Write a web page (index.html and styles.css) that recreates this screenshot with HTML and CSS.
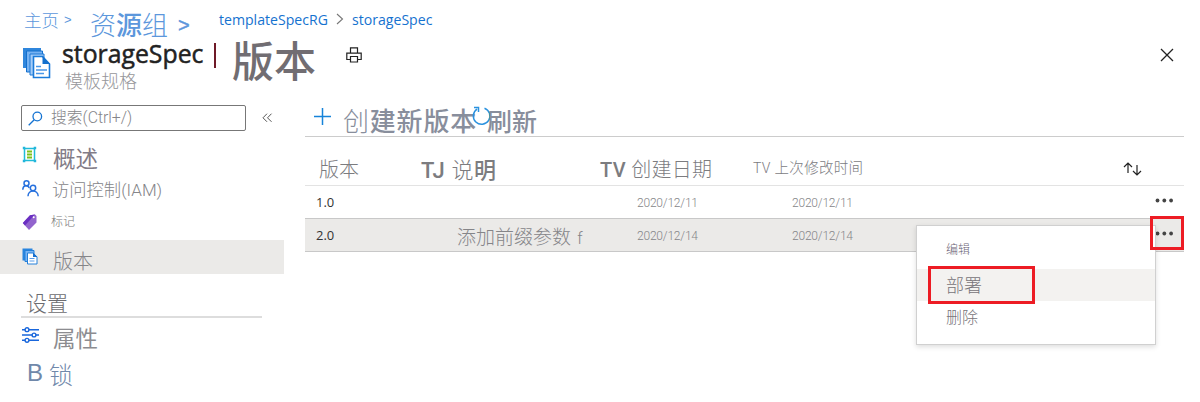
FILE: index.html
```html
<!DOCTYPE html>
<html lang="zh-CN">
<head>
<meta charset="utf-8">
<title>storageSpec | 版本</title>
<link rel="stylesheet" href="styles.css">
</head>
<body>
<div class="page">
  <nav class="crumbs">
    <a class="crumb-home">主页 <span class="crumb-sep-small">&gt;</span></a>
    <a class="crumb-group">资<b>源</b>组<span class="crumb-sep">&gt;</span></a>
    <a class="crumb-link crumb-rg">templateSpecRG</a>
    <svg class="crumb-chevron" width="8" height="12" viewBox="0 0 8 12"><path d="M1 1l5.500 5L1 11" fill="none" stroke="#777" stroke-width="1.100"/></svg>
    <a class="crumb-link crumb-spec">storageSpec</a>
  </nav>
  <header class="title-bar">
    <svg class="title-icon" width="29" height="32" viewBox="0 0 29 32">
      <path d="M1 1h18v20H1z" fill="#2f86dc"/><path d="M4.500 4h16v21h-16z" fill="#76b2f2" stroke="#1470cd"/>
      <path d="M8 7h14v21H8z" fill="#a5cdf8" stroke="#1c79d5"/>
      <path d="M11.500 9.500h9l7 7.500v13.500h-16z" fill="#fff" stroke="#1b7bd9" stroke-width="1.600"/><path d="M20.500 9l7.500 8h-7.500z" fill="#1470cd"/>
      <path d="M14 19.500h5M14 23h11M14 26.500h8" stroke="#4a97e8" stroke-width="1.500"/>
    </svg>
    <div class="title-text">
      <h1 class="title-name">storageSpec</h1>
      <p class="title-kind">模板规格</p>
    </div>
    <span class="title-divider"></span>
    <h2 class="title-section">版本</h2>
    <svg class="print-icon" width="16" height="16" viewBox="0 0 16 16" fill="none" stroke="#222" stroke-width="1.200"><path d="M4.500 6V.8h7V6M4 12.500H.8V6.200h14.400v6.300H12M4.500 9.500h7v5.500h-7z"/></svg>
    <svg class="close-icon" width="14" height="14" viewBox="0 0 14 14"><path d="M1 1l12 12M13 1L1 13" stroke="#222" stroke-width="1.300"/></svg>
  </header>
  <div class="body">
    <aside class="sidebar">
      <div class="search-row">
        <div class="search-box">
          <svg width="15" height="15" viewBox="0 0 15 15" fill="none" stroke="#1473d2" stroke-width="1.300"><circle cx="9.300" cy="5.500" r="4.300"/><path d="M6.200 8.700L.7 14.200"/></svg>
          <span class="search-text">搜索(Ctrl+/)</span>
        </div>
        <svg class="collapse" width="11" height="10" viewBox="0 0 11 10" fill="none" stroke="#555"><path d="M5 .7L1 4.800l4 4M9.500 .7l-4 4.100 4 4"/></svg>
      </div>
      <div class="nav-item nav-overview">
        <svg width="16" height="17" viewBox="0 0 16 17"><path d="M2.500 2.500h10v12h-10z" fill="#fff" stroke="#20bcd8" stroke-width="1.500"/><path d="M.8 .8h2.500v2.500H.8zM11.700 .8h2.500v2.500h-2.500zM.8 13.700h2.500v2.500H.8zM11.700 13.700h2.500v2.500h-2.500z" fill="#22b6dc"/><path d="M5 5.500h5M5 8.500h5M5 11.500h5" stroke="#7fc21c" stroke-width="2"/></svg>
        <b>概述</b>
      </div>
      <div class="nav-item nav-iam">
        <svg width="17" height="17" viewBox="0 0 17 17" fill="none" stroke="#2670dd" stroke-width="1.500"><circle cx="4.500" cy="3.300" r="2.500"/><path d="M.8 9.800c0-5 5-5 6.500-2"/><circle cx="11" cy="8" r="2.700"/><path d="M6 16.200c0-7 10-7 10.200 0"/></svg>
        <span>访问控制<span class="latin-light">(IAM)</span></span>
      </div>
      <div class="nav-item nav-tags">
        <svg width="16" height="17" viewBox="0 0 16 17"><path d="M8 1.200l5-.7L14.500 2v6.500L7 16 .8 9z" fill="#9264cd"/><path d="M8 1.200l5-.7L3 11.500.8 9z" fill="#6a2fc2"/><circle cx="11.700" cy="3.300" r="1" fill="#fff"/></svg>
        <span>标记</span>
      </div>
      <div class="nav-item nav-versions">
        <svg width="16" height="17" viewBox="0 0 16 17"><path d="M.5 .5h10v12H.5z" fill="#2985df"/><path d="M3 2.500h9v11H3z" fill="#7ab5f4" stroke="#2580da"/><path d="M5.500 5h5.500l4 4v7H5.500z" fill="#fff" stroke="#2580da"/><path d="M11 4.500l4.500 4.500H11z" fill="#1870cf"/><path d="M7.500 10.500h5M7.500 13h5" stroke="#5b9eea"/></svg>
        <span>版本</span>
      </div>
      <div class="nav-heading">设置</div>
      <div class="nav-item nav-props">
        <svg width="17" height="16" viewBox="0 0 17 16" fill="#fff" stroke="#1967dc" stroke-width="1.400"><path d="M0 2.700h17M0 8h17M0 13.300h17"/><circle cx="5" cy="2.700" r="1.900"/><circle cx="12" cy="8" r="1.900"/><circle cx="5" cy="13.300" r="1.900"/></svg>
        <b>属性</b>
      </div>
      <div class="nav-locks"><span class="lock-mark">B</span><span>锁</span></div>
    </aside>
    <main class="content">
      <div class="toolbar">
        <svg class="plus-icon" width="17" height="17" viewBox="0 0 17 17"><path d="M8.500 0v17M0 8.500h17" stroke="#1683d9" stroke-width="1.500"/></svg>
        <span class="tool-create">创<b>建新版本</b></span>
        <svg class="refresh-icon" width="20" height="20" viewBox="0 0 20 20" fill="none" stroke="#2b92df" stroke-width="1.500"><path d="M12.500 2.200A8.300 8.300 0 1 1 5 3.100M2 1.500h4.500V6"/></svg>
        <b class="tool-refresh">刷新</b>
      </div>
      <div class="row head">
        <span class="col-version">版本</span>
        <span class="col-desc"><b class="mark">TJ</b> 说<b>明</b></span>
        <span class="col-created"><b class="mark">TV</b> 创建日期</span>
        <span class="col-modified"><span class="mark-small">TV</span> 上次修改时间</span>
        <svg class="sort-icon" width="19" height="14" viewBox="0 0 19 14" fill="none" stroke="#222" stroke-width="1.200"><path d="M5 11V1M1 5l4-4 4 4M14 3v10M10 9l4 4 4-4"/></svg>
      </div>
      <div class="row">
        <span class="col-version">1.0</span>
        <span class="col-desc"></span>
        <span class="col-created">2020/12/11</span>
        <span class="col-modified">2020/12/11</span>
        <svg class="more" width="19" height="5" viewBox="0 0 19 5" fill="#444"><circle cx="2.500" cy="2.500" r="1.900"/><circle cx="9.300" cy="2.500" r="1.900"/><circle cx="16.100" cy="2.500" r="1.900"/></svg>
      </div>
      <div class="row selected">
        <span class="col-version">2.0</span>
        <span class="col-desc">添加前缀参数 <span class="desc-tail">f</span></span>
        <span class="col-created">2020/12/14</span>
        <span class="col-modified">2020/12/14</span>
        <svg class="more" width="19" height="5" viewBox="0 0 19 5" fill="#444"><circle cx="2.500" cy="2.500" r="1.900"/><circle cx="9.300" cy="2.500" r="1.900"/><circle cx="16.100" cy="2.500" r="1.900"/></svg>
        <div class="menu">
          <div class="menu-edit">编辑</div>
          <div class="menu-deploy">部署<div class="mark-box deploy-box"></div></div>
          <div class="menu-delete">删除</div>
        </div>
        <div class="mark-box more-box"></div>
      </div>
    </main>
  </div>
</div>
</body>
</html>
```
FILE: styles.css
```css
* { box-sizing: border-box; }
body { margin: 0; background: #fff; font-family: "Liberation Sans", "Noto Sans CJK SC", sans-serif; }
svg { display: block; flex: none; }
h1, h2, p { margin: 0; font-weight: 400; }
.page { width: 1200px; height: 402px; overflow: hidden; }

.crumbs { display: flex; align-items: flex-start; height: 40px; padding-left: 24px; white-space: nowrap; color: #5c97dc; }
.crumb-home { display: flex; gap: 5px; width: 66px; margin-top: 11px; font-size: 17.500px; line-height: 20px; font-weight: 300; }
.crumb-sep-small { font-size: 13px; line-height: 18px; }
.crumb-group { display: flex; width: 129px; margin-top: 10px; font-size: 26px; line-height: 32px; font-weight: 300; }
.crumb-group b { font-weight: 500; }
.crumb-sep { margin-left: 10px; font-size: 20px; font-weight: 400; line-height: 30px; -webkit-text-stroke: .4px; }
.crumb-link { font-family: "Open Sans", sans-serif; font-size: 14.100px; line-height: 20px; margin-top: 10px; color: #1572cf; }
.crumb-rg { width: 117px; }
.crumb-chevron { margin: 13px 8px 0 0; }

.title-bar { display: flex; align-items: flex-start; height: 65px; padding-left: 22px; }
.title-icon { margin-top: 7px; }
.title-text { width: 163px; padding-left: 11px; }
.title-name { font: 500 24.800px/26px "Open Sans", sans-serif; color: #222; -webkit-text-stroke: .5px #222; }
.title-kind { margin: 3px 0 0 3px; font-size: 18px; line-height: 26px; font-weight: 300; color: #96969a; }
.title-divider { width: 2px; height: 25px; margin-top: 3px; background: #6f1a28; }
.title-section { width: 130px; padding-left: 16px; font-size: 42px; line-height: 45px; font-weight: 500; color: #716d72; }
.print-icon { margin-top: 7px; }
.close-icon { margin: 8px 0 0 798px; }

.body { display: flex; }
.sidebar { width: 284px; }
.search-row { display: flex; align-items: center; height: 26px; padding-left: 21px; }
.search-box { display: flex; align-items: center; gap: 8px; width: 225px; height: 26px; padding-left: 6px; border: 1px solid #777; border-radius: 2px; }
.search-text { font: 300 15.800px/22px "Roboto", "Noto Sans CJK SC", sans-serif; color: #858589; }
.collapse { margin-left: 16px; }

.nav-item { display: flex; align-items: center; gap: 15px; padding-left: 22px; font-weight: 300; color: #858589; }
.nav-overview { height: 44px; margin-top: 4px; font-size: 22.500px; color: #827c87; }
.nav-overview svg { margin-bottom: 5px; }
.nav-iam { height: 22px; font-size: 17.300px; gap: 13px; }
.nav-iam > span { line-height: 22px; padding-bottom: 1px; }
.nav-iam svg { margin-bottom: 3px; }
.latin-light { font-family: "Roboto", sans-serif; font-size: 17px; }
.nav-tags { height: 39px; font-size: 12px; gap: 13px; padding-top: 2px; color: #777; }
.nav-tags svg { margin-top: 2px; }
.nav-tags > span { padding-bottom: 3px; }
.nav-versions { height: 34px; font-size: 20px; gap: 15px; background: #ebeae8; }
.nav-versions svg { margin-bottom: 1px; }
.nav-versions span { padding-top: 7px; }
.nav-heading { width: 241px; height: 44px; margin-left: 21px; padding: 17px 0 0 5px; border-bottom: 2px solid #ddd; font-size: 21px; line-height: 26px; font-weight: 300; color: #6c6c70; }
.nav-props { height: 38px; font-size: 22.500px; gap: 14px; color: #8c8c90; }
.nav-props svg { margin-bottom: 4px; }
.nav-locks { display: flex; align-items: center; gap: 6px; height: 34px; padding-left: 27px; font-size: 24px; font-weight: 300; color: #7088aa; }

.content { width: 879px; margin-left: 21px; }
.toolbar { display: flex; align-items: flex-start; height: 32px; padding-left: 9px; border-bottom: 1px solid #ccc; white-space: nowrap; color: #888e9c; }
.plus-icon { margin-top: 3px; }
.tool-create { width: 141px; padding-left: 12px; font-size: 26px; letter-spacing: .8px; line-height: 34px; font-weight: 300; }
.tool-create b, .tool-refresh { font-weight: 500; }
.refresh-icon { margin-top: 1px; }
.tool-refresh { margin-left: -5px; font-size: 25px; line-height: 34px; }

.row { position: relative; display: flex; align-items: center; height: 33px; border-bottom: 1px solid #c8c8c8; padding-left: 11px; font-size: 12px; font-weight: 300; color: #858588; white-space: nowrap; }
.row > span { line-height: 30px; }
.head { height: 49px; padding-top: 15px; border-bottom-color: #e3e3e3; color: #7c7c7f; }
.selected { background: #ebeae8; }
.row .col-version { width: 141px; font: 13px "Open Sans", sans-serif; color: #333; }
.col-desc { width: 180px; font-size: 19px; padding-top: 6px; }
.desc-tail { margin-left: 1px; font: 300 16px "Roboto", sans-serif; }
.col-created { width: 155px; padding-top: 1px; font-family: "Roboto", "Noto Sans CJK SC", sans-serif; letter-spacing: -.2px; }
.col-modified { width: 332px; padding-top: 1px; font-family: "Roboto", "Noto Sans CJK SC", sans-serif; letter-spacing: -.2px; }
.head .col-version { width: 105px; padding-left: 3px; font: 300 20px "Noto Sans CJK SC", sans-serif; color: #7c7c7f; }
.head .col-desc { width: 179px; font-size: 22px; padding-top: 4px; letter-spacing: .3px; }
.head .col-desc b { font-weight: 500; }
.head .mark { font-family: "Roboto", sans-serif; font-weight: 500; letter-spacing: .5px; }
.head .col-created { width: 153px; font-size: 20px; padding-top: 2px; letter-spacing: .2px; }
.head .col-modified { width: 370px; font-size: 14.500px; padding-top: 0; letter-spacing: .3px; }
.mark-small { font-size: 14px; }
.more { margin-left: 31px; margin-bottom: 4px; }

.menu { position: absolute; z-index: 1; left: 611px; top: 6px; width: 240px; height: 120px; border: 1px solid #d0d0d0; background: #fff; box-shadow: 0 2px 5px #0002; font-size: 18px; color: #777479; }
.menu > div { padding-left: 29px; }
.menu-edit { height: 43px; font-size: 12px; line-height: 48px; color: #6b5f75; }
.menu-deploy { position: relative; height: 32px; line-height: 34px; background: #f3f2f0; }
.menu-delete { line-height: 34px; font-size: 16px; }
.mark-box { position: absolute; border: 3px solid #ed1c24; }
.deploy-box { left: 11px; top: -3px; width: 107px; height: 38px; }
.more-box { z-index: 2; left: 845px; top: -3px; width: 34px; height: 34px; }
```
